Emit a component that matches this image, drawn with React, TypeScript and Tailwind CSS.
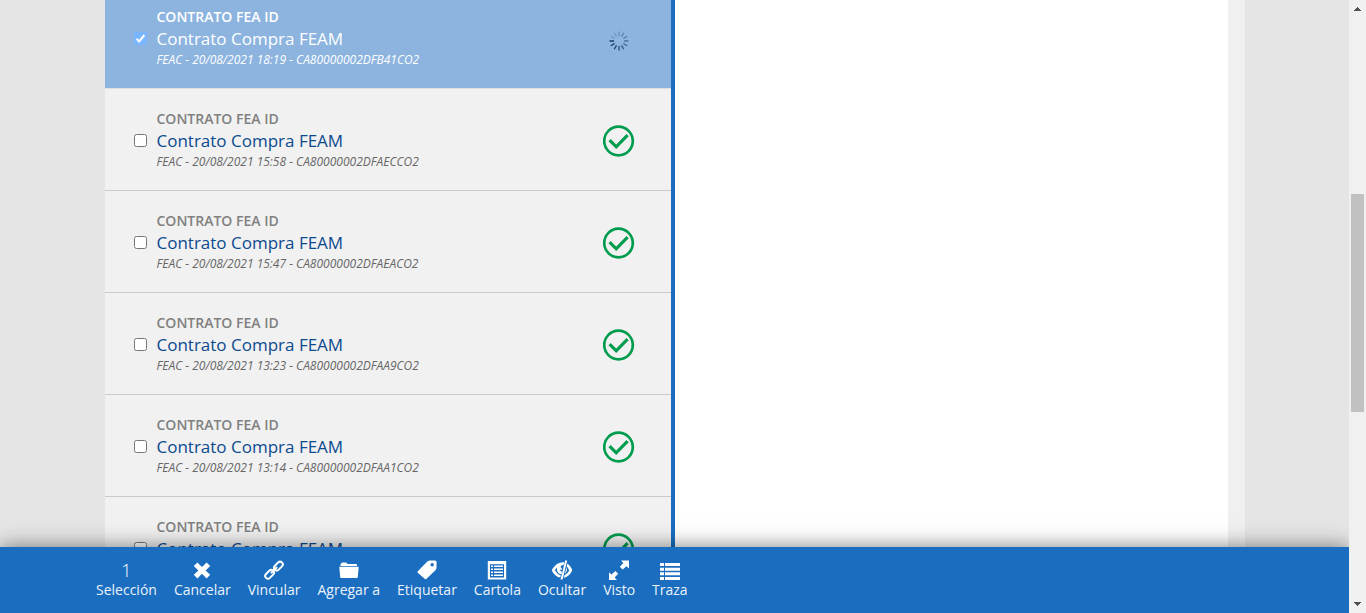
import { useState, type ReactNode } from "react";

type Contract = { code: string; time: string; pending?: boolean };

const contracts: Contract[] = [
  { time: "18:19", code: "CA80000002DFB41CO2", pending: true },
  { time: "15:58", code: "CA80000002DFAECCO2" },
  { time: "15:47", code: "CA80000002DFAEACO2" },
  { time: "13:23", code: "CA80000002DFAA9CO2" },
  { time: "13:14", code: "CA80000002DFAA1CO2" },
  { time: "13:02", code: "CA80000002DFA9FCO2" },
];

function Spinner() {
  const steps = Array.from({ length: 12 }, (_, i) => i);
  return (
    <svg viewBox="0 0 20 20" className="mt-1 size-5" role="img" aria-label="Procesando">
      {steps.map((i) => (
        <line
          key={i}
          x1="5"
          y1="10"
          x2="0.5"
          y2="10"
          stroke="#0f355f"
          strokeWidth="1.4"
          opacity={i === 0 ? 1 : 1 - Math.min(i, 10) * 0.08}
          transform={`rotate(${-i * 30} 10 10)`}
        />
      ))}
    </svg>
  );
}

function Done() {
  return (
    <svg viewBox="0 0 32 32" className="size-8" fill="none" stroke="#009c4e" role="img" aria-label="Completado">
      <circle cx="15.5" cy="16" r="14.3" strokeWidth="2.7" />
      <path d="M6.6 15.2 L13.2 21.8 L24.6 10.2" strokeWidth="3.2" />
    </svg>
  );
}

function Row({ item, checked, onToggle }: { item: Contract; checked: boolean; onToggle: () => void }) {
  const id = `sel-${item.code}`;
  return (
    <li
      className={`flex h-[102px] items-center border-b pt-0.5 pr-9 pl-[29px] ${
        checked ? "border-[#dfdfdf] bg-[#8cb4df] text-white" : "border-[#cacaca] bg-[#f1f1f1]"
      }`}
    >
      <span className="grid size-[13px] shrink-0">
        <input
          id={id}
          type="checkbox"
          checked={checked}
          onChange={onToggle}
          className={`col-start-1 row-start-1 size-[13px] ${checked ? "appearance-none rounded-xs bg-[#7ab5ff]" : ""}`}
        />
        {checked && (
          <svg
            viewBox="0 0 13 13"
            className="pointer-events-none col-start-1 row-start-1 size-[13px]"
            fill="none"
            stroke="white"
            strokeWidth="2"
            aria-hidden="true"
          >
            <path d="M2.6 6.8 L5.2 9.4 L10.4 3" />
          </svg>
        )}
      </span>
      <label htmlFor={id} className="ml-[10px] flex-1 pb-0.5">
        <span className={`block text-[14px] leading-5 font-semibold ${checked ? "" : "text-[#808080]"}`}>
          CONTRATO FEA ID
        </span>
        <span className={`block text-[17px] leading-6 ${checked ? "" : "text-[#0b4a8f]"}`}>Contrato Compra FEAM</span>
        <span className={`block text-[12px] leading-[18px] italic ${checked ? "" : "text-[#666666]"}`}>
          FEAC - 20/08/2021 {item.time} - {item.code}
        </span>
      </label>
      <span className="flex w-8 justify-center">{item.pending ? <Spinner /> : <Done />}</span>
    </li>
  );
}

function Icon({ children }: { children: ReactNode }) {
  return (
    <svg viewBox="0 0 20 20" className="size-5 text-white" fill="currentColor" aria-hidden="true">
      {children}
    </svg>
  );
}

const actions: { label: string; icon: ReactNode }[] = [
  {
    label: "Cancelar",
    icon: <path d="M1.8 6 L5.4 2.4 L10 7 L14.6 2.4 L18.2 6 L13.6 10.4 L18.2 14.8 L14.6 18.4 L10 13.8 L5.4 18.4 L1.8 14.8 L6.4 10.4 Z" />,
  },
  {
    label: "Vincular",
    icon: (
      <g fill="none" stroke="currentColor" strokeWidth="2" strokeLinecap="round">
        <rect x="9.4" y="3.4" width="10" height="5.4" rx="2.7" transform="rotate(-45 14.4 6.1)" />
        <rect x="0.6" y="11.6" width="10" height="5.4" rx="2.7" transform="rotate(-45 5.6 14.3)" />
        <path d="M7.5 12.5 L12.5 7.5" />
      </g>
    ),
  },
  {
    label: "Agregar a",
    icon: (
      <>
        <path d="M1.5 6 V4.2 L3 2.6 H7.2 L8.6 4 H17.2 Q18 4 18 5 V6 Z" />
        <path d="M0.3 6.8 H19.7 L18.8 17 Q18.7 18 17.8 18 H2.2 Q1.3 18 1.2 17 Z" />
      </>
    ),
  },
  {
    label: "Etiquetar",
    icon: (
      <path
        fillRule="evenodd"
        d="M0.6 11.4 L9.8 2 Q11 0.7 12.6 0.6 L18 0.4 Q19.6 0.4 19.6 2 L19.5 8 Q19.4 9.2 18.4 10.2 L9.6 18.8 Q8.6 19.6 7.6 18.8 L0.8 12.8 Q0 12.1 0.6 11.4 Z M15.2 3 A1.7 1.7 0 1 0 15.2 6.4 A1.7 1.7 0 1 0 15.2 3 Z"
      />
    ),
  },
  {
    label: "Cartola",
    icon: (
      <>
        <path fillRule="evenodd" d="M0.8 1 H19.2 V19.6 H0.8 Z M3 4.2 V17.6 H17 V4.2 Z" />
        <path d="M4 5.4h2v1.6H4z M7 5.4h9v1.6H7z M4 8.4h2v1.6H4z M7 8.4h9v1.6H7z M4 11.4h2v1.6H4z M7 11.4h9v1.6H7z M4 14.4h2v1.6H4z M7 14.4h9v1.6H7z" />
      </>
    ),
  },
  {
    label: "Ocultar",
    icon: (
      <>
        <path
          fillRule="evenodd"
          d="M12.3 2.2 Q4.5 1.4 -0.4 10.2 Q3 16.8 8.2 17.6 L8.8 15.4 Q5.2 14 3 10.4 Q3.8 8.6 5 7.4 Q4.2 13.6 9.4 14.4 L10 11.8 Q7.6 11.4 8 9.2 Q8.6 10.4 9.8 9.8 Q10.4 8 8.4 7 Q9 5.2 11.6 5 Z"
        />
        <path d="M13.2 0.4 H15.2 L10.6 19.6 H8.6 Z" />
        <path d="M15.4 3.4 Q18.8 5.8 20.4 10.2 Q17.4 16.6 11.8 17.8 L12.5 15.2 Q15.6 13.8 17.2 10.4 Q16.4 8 14.7 6.4 Z" />
        <path d="M14.4 7.6 Q15.9 11.2 12.9 13.8 Z" />
      </>
    ),
  },
  {
    label: "Visto",
    icon: (
      <>
        <path d="M12 0.6 H20 V8.4 L17.6 6.2 L13.6 9.6 L10.8 6.8 L14.4 3 Z" />
        <path d="M8 20 H0 V12.2 L2.4 14.4 L6.4 11 L9.2 13.8 L5.6 17.6 Z" />
      </>
    ),
  },
  {
    label: "Traza",
    icon: (
      <path d="M0 3h4v3H0z M5 3h15v3H5z M0 7.7h4v3H0z M5 7.7h15v3H5z M0 12.3h4v3H0z M5 12.3h15v3H5z M0 17h4v3H0z M5 17h15v3H5z" />
    ),
  },
];

export default function App() {
  const [selected, setSelected] = useState<string[]>([contracts[0].code]);
  const toggle = (code: string) =>
    setSelected((s) => (s.includes(code) ? s.filter((c) => c !== code) : [...s, code]));

  return (
    <div className="flex h-screen overflow-hidden bg-[#e5e5e5] font-['Open_Sans',sans-serif]">
      <div className="flex min-w-0 flex-1 flex-col overflow-hidden">
        <main className="mx-auto flex min-h-0 w-full max-w-[1140px] flex-1 bg-[#f0f0f0] pr-[17px]">
          <div className="min-h-0 flex-1 overflow-hidden border-r-4 border-[#1a6dbf]">
            <ul className="-mt-[13px]">
              {contracts.map((c) => (
                <Row key={c.code} item={c} checked={selected.includes(c.code)} onToggle={() => toggle(c.code)} />
              ))}
            </ul>
          </div>
          <section className="w-[553px] shrink-0 bg-white" />
        </main>
        <nav className="z-10 flex h-[66px] shrink-0 gap-[17px] bg-[#1a6dbf] pt-[13px] pl-24 text-[14px] leading-[18px] text-[#eaf3fb] shadow-[0_0_20px_rgba(0,0,0,0.5)]">
          <div className="flex flex-col items-center">
            <span className="text-[18px] leading-[21px] font-light text-white">{selected.length}</span>
            <span>Selección</span>
          </div>
          {actions.map((a) => (
            <button
              key={a.label}
              type="button"
              className="flex flex-col items-center justify-start"
              onClick={a.label === "Cancelar" ? () => setSelected([]) : undefined}
            >
              <span className="flex h-[21px] items-start">
                <Icon>{a.icon}</Icon>
              </span>
              <span>{a.label}</span>
            </button>
          ))}
        </nav>
      </div>
      <div className="flex w-[17px] shrink-0 flex-col items-center bg-[#f0f0f0]" aria-hidden="true">
        <svg viewBox="0 0 17 17" className="h-[17px] w-[17px]" fill="#505050" shapeRendering="crispEdges">
          <path d="M5 11 L8.5 7 L12 11 Z" />
        </svg>
        <div className="flex w-[13px] flex-1 flex-col">
          <div className="flex-[177]" />
          <div className="flex-[218] bg-[#c1c1c1]" />
          <div className="flex-[184]" />
        </div>
        <svg viewBox="0 0 17 17" className="h-[17px] w-[17px]" fill="#505050" shapeRendering="crispEdges">
          <path d="M5 6 L8.5 10 L12 6 Z" />
        </svg>
      </div>
    </div>
  );
}
